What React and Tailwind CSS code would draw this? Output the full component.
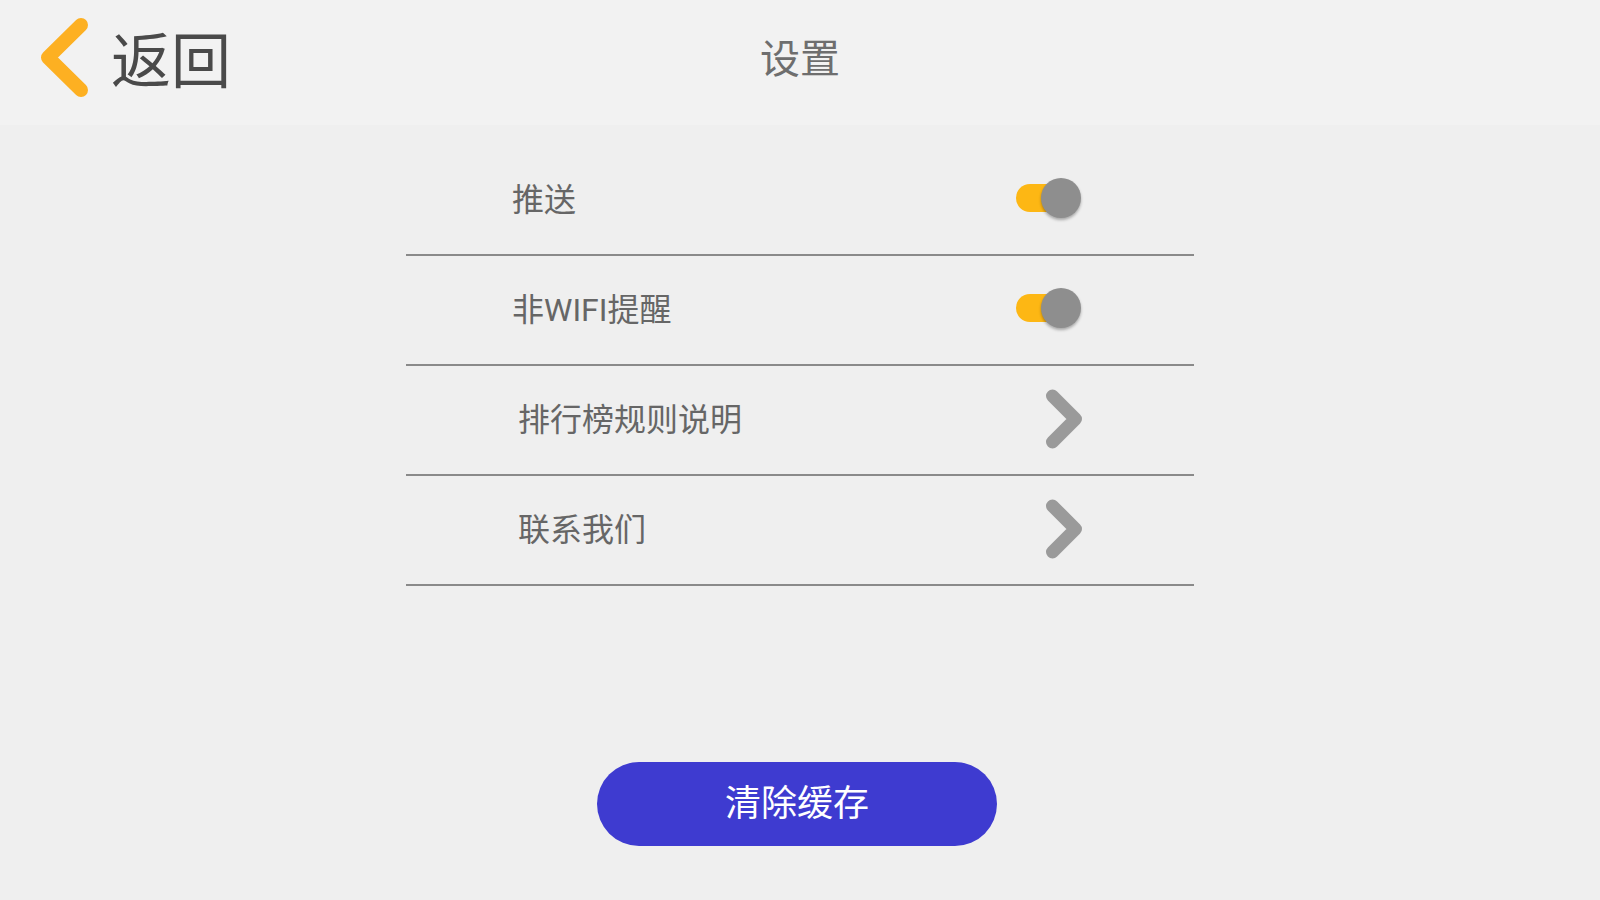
import React from "react";

const font = { fontFamily: "Roboto, 'Noto Sans CJK SC', sans-serif" };

function Toggle() {
  return (
    <div className="relative w-[65px] h-[40px] mb-[5px]">
      <div className="absolute left-0 top-[6px] w-[48px] h-[28px] rounded-full bg-[#fdb714]" />
      <div className="absolute right-0 top-0 w-[40px] h-[40px] rounded-full bg-[#8e8e8e] shadow-[0_2px_3px_rgba(0,0,0,0.3)]" />
    </div>
  );
}

function Chevron() {
  return (
    <svg width="40" height="64" viewBox="0 0 40 64" className="mr-[-4px]">
      <path d="M7.5 8 L30.5 31 L7.5 54" fill="none" stroke="#9a9a9a" strokeWidth="13" strokeLinecap="round" strokeLinejoin="round" />
    </svg>
  );
}

function Row({ label, right, indent }) {
  return (
    <div className={`flex items-center justify-between h-[110px] border-b-2 border-[#8a8a8a] pr-[113px] ${indent ? "pl-[112px]" : "pl-[106px]"}`}>
      <span className="text-[32px] text-[#666666] leading-none">{label}</span>
      {right}
    </div>
  );
}

export default function App() {
  return (
    <div className="w-[1600px] h-[900px] bg-[#efefef] flex flex-col" style={font}>
      <div className="h-[125px] bg-[#f2f2f2] grid grid-cols-3 items-center pb-[8px]">
        <div className="flex items-center pl-[33px] gap-[16px]">
          <svg width="62" height="84" viewBox="0 0 62 84">
            <path d="M48 8 L15 40.5 L48 73" fill="none" stroke="#fdb022" strokeWidth="14" strokeLinecap="round" strokeLinejoin="round" />
          </svg>
          <span className="pt-[8px] text-[60px] leading-none text-[#4a4a4a]">返回</span>
        </div>
        <div className="justify-self-center pt-[2px] text-[40px] leading-none text-[#6e6e6e]">设置</div>
        <div />
      </div>

      <div className="w-[788px] ml-[406px] mt-[21px] flex flex-col">
        <Row label="推送" right={<Toggle />} />
        <Row label="非WIFI提醒" right={<Toggle />} />
        <Row label="排行榜规则说明" right={<Chevron />} indent />
        <Row label="联系我们" right={<Chevron />} indent />
      </div>

      <div className="flex-1 flex items-end justify-center pb-[54px]">
        <button className="w-[400px] h-[84px] rounded-full bg-[#3e3bd0] text-white text-[36px] leading-none mr-[6px]">
          清除缓存
        </button>
      </div>
    </div>
  );
}
